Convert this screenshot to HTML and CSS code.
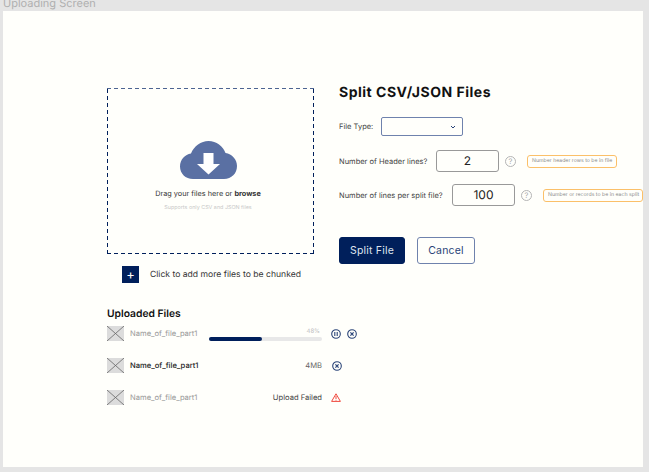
FILE: index.html
```html
<!DOCTYPE html>
<html lang="en">
<head>
    <meta charset="UTF-8">
    <meta name="viewport" content="width=device-width, initial-scale=1.0">
    <title>Uploading Screen</title>
    <link rel="stylesheet" href="styles.css">
</head>
<body>
    <div class="frame-title">Uploading Screen</div>
    <main class="panel">
        <div class="top">
            <section class="left">
                <div class="dropzone">
                    <svg class="cloud" width="57" height="38" viewBox="0 0 57 38">
                        <path fill="#5a70a3" d="M13 38C5.500 38 0 32.500 0 25.500C0 18.500 5 13.500 11 12.500C14 5 21 0 28.500 0C36.500 0 43 5 45.500 12C52 13 57 18.500 57 25C57 32.500 51.500 38 44 38Z"/>
                        <path fill="#fff" d="M23.500 12H33.500V23H40L28.500 33.500L17 23H23.500Z"/>
                    </svg>
                    <p class="drag">Drag your files here or <b>browse</b></p>
                    <p class="supports">Supports only CSV and JSON files</p>
                </div>
                <div class="add-more">
                    <button class="plus">+</button>
                    <span>Click to add more files to be chunked</span>
                </div>
            </section>
            <section class="right">
                <h1>Split CSV/JSON Files</h1>
                <div class="row type-row">
                    <label>File Type:</label>
                    <div class="select">
                        <svg width="6" height="4" viewBox="0 0 6 4"><path d="M1 1L3 3L5 1" fill="none" stroke="#2a4478" stroke-width="1"/></svg>
                    </div>
                </div>
                <div class="row header-row">
                    <label>Number of Header lines?</label>
                    <div class="num">2</div>
                    <span class="help">?</span>
                    <span class="tip">Number header rows to be in file</span>
                </div>
                <div class="row lines-row">
                    <label>Number of lines per split file?</label>
                    <div class="num">100</div>
                    <span class="help">?</span>
                    <span class="tip">Number or records to be in each split</span>
                </div>
                <div class="actions">
                    <button class="btn primary">Split File</button>
                    <button class="btn secondary">Cancel</button>
                </div>
            </section>
        </div>
        <section class="files">
            <h2>Uploaded Files</h2>
            <div class="file">
                <svg class="thumb" width="17" height="15" viewBox="0 0 17 15"><rect width="17" height="15" fill="#dcdcdc"/><path d="M0 0L17 15M17 0L0 15" stroke="#666" stroke-width="0.800"/></svg>
                <span class="name">Name_of_file_part1</span>
                <div class="progress">
                    <span class="pct">48%</span>
                    <div class="track"><div class="fill" style="width: 47%"></div></div>
                </div>
                <svg class="icon" width="10" height="10" viewBox="0 0 10 10"><circle cx="5" cy="5" r="4.300" fill="none" stroke="#2a4478" stroke-width="1.100"/><path d="M3.800 3V7M6.200 3V7" stroke="#2a4478" stroke-width="1.100"/></svg>
                <svg class="icon" width="10" height="10" viewBox="0 0 10 10"><circle cx="5" cy="5" r="4.300" fill="none" stroke="#2a4478" stroke-width="1.100"/><path d="M3.400 3.400L6.600 6.600M6.600 3.400L3.400 6.600" stroke="#2a4478" stroke-width="1.200"/></svg>
            </div>
            <div class="file">
                <svg class="thumb" width="17" height="15" viewBox="0 0 17 15"><rect width="17" height="15" fill="#dcdcdc"/><path d="M0 0L17 15M17 0L0 15" stroke="#666" stroke-width="0.800"/></svg>
                <span class="name done">Name_of_file_part1</span>
                <span class="size">4MB</span>
                <svg class="icon" width="10" height="10" viewBox="0 0 10 10"><circle cx="5" cy="5" r="4.300" fill="none" stroke="#2a4478" stroke-width="1.100"/><path d="M3.400 3.400L6.600 6.600M6.600 3.400L3.400 6.600" stroke="#2a4478" stroke-width="1.200"/></svg>
            </div>
            <div class="file">
                <svg class="thumb" width="17" height="15" viewBox="0 0 17 15"><rect width="17" height="15" fill="#dcdcdc"/><path d="M0 0L17 15M17 0L0 15" stroke="#666" stroke-width="0.800"/></svg>
                <span class="name">Name_of_file_part1</span>
                <span class="failed">Upload Failed</span>
                <svg class="icon warn" width="10" height="9" viewBox="0 0 10 9"><path d="M5 0.800L9.400 8.400H0.600Z" fill="none" stroke="#f0483e" stroke-width="1"/><path d="M5 3V6M5 6.800V7.600" stroke="#f0483e" stroke-width="1"/></svg>
            </div>
        </section>
    </main>
</body>
</html>
```

FILE: styles.css
```css
html, body {
    height: 100%;
}
body {
    margin: 0;
    background-color: #e5e5e5;
    font-family: Inter, "Liberation Sans", sans-serif;
    text-rendering: geometricPrecision;
    overflow: hidden;
}
.frame-title {
    height: 11px;
    padding-left: 3px;
    font-size: 11px;
    line-height: 7px;
    color: #b0b0b0;
    overflow: hidden;
}
.panel {
    margin: 0 6px 0 3px;
    height: 456px;
    background-color: #fffffb;
    padding: 77px 0 0 104px;
    box-sizing: border-box;
}
.top {
    display: flex;
}
.left {
    width: 207px;
}
.dropzone {
    height: 166px;
    box-sizing: border-box;
    background-image:
        repeating-linear-gradient(90deg, #4d6491 0 4px, transparent 4px 7px),
        repeating-linear-gradient(90deg, #001f5b 0 4px, transparent 4px 7px),
        repeating-linear-gradient(0deg, #001f5b 0 4px, transparent 4px 7px),
        repeating-linear-gradient(0deg, #001f5b 0 4px, transparent 4px 7px);
    background-size: 100% 1px, 100% 1px, 1px 100%, 1px 100%;
    background-position: 0 0, 0 100%, 0 0, 100% 0;
    background-repeat: no-repeat;
    display: flex;
    flex-direction: column;
    align-items: center;
    padding: 53px 5px 0 0;
}
.cloud {
    display: block;
}
.drag {
    margin: 10px 0 0;
    font-size: 7.300px;
    line-height: 9px;
    color: #333;
    white-space: nowrap;
}
.drag b {
    font-weight: 700;
}
.supports {
    margin: 7px 0 0;
    font-size: 5.400px;
    line-height: 7px;
    color: #c8c8c8;
    white-space: nowrap;
}
.add-more {
    display: flex;
    align-items: center;
    gap: 11px;
    margin: 12px 0 0 15px;
    font-size: 8.600px;
    color: #333;
    white-space: nowrap;
}
.plus {
    width: 17px;
    height: 17px;
    padding: 0;
    border: none;
    background-color: #001f5b;
    color: #fff;
    font-size: 13px;
    line-height: 17px;
    font-family: inherit;
}
.right {
    margin-left: 25px;
    flex: 1;
    min-width: 0;
}
h1 {
    margin: -4px 0 0;
    font-size: 14px;
    line-height: 18px;
    font-weight: 700;
    letter-spacing: 0.500px;
    color: #111;
    white-space: nowrap;
}
.row {
    display: flex;
    align-items: center;
    font-size: 7.500px;
    color: #444;
    white-space: nowrap;
}
.row label {
    flex: none;
}
.type-row {
    margin-top: 15px;
}
.type-row label {
    width: 42px;
}
.select {
    width: 82px;
    height: 19px;
    box-sizing: border-box;
    border: 1px solid #6f82ad;
    border-radius: 2px;
    display: flex;
    align-items: center;
    justify-content: flex-end;
    padding-right: 6px;
}
.header-row {
    margin-top: 14px;
}
.header-row label {
    width: 97px;
}
.lines-row {
    margin-top: 12px;
}
.lines-row label {
    width: 113px;
}
.num {
    width: 63px;
    height: 22px;
    flex: none;
    box-sizing: border-box;
    border: 1px solid #999;
    border-radius: 3px;
    text-align: center;
    font-size: 12px;
    line-height: 20px;
    color: #222;
}
.help {
    width: 11px;
    height: 11px;
    flex: none;
    box-sizing: border-box;
    margin-left: 6px;
    border: 1px solid #b5b5b5;
    border-radius: 50%;
    text-align: center;
    font-size: 7.500px;
    line-height: 9px;
    color: #aaa;
}
.tip {
    margin-left: 11px;
    height: 13px;
    flex: none;
    box-sizing: border-box;
    padding: 0 4px;
    border: 1px solid #fbc069;
    border-radius: 3px;
    font-size: 5.200px;
    line-height: 11px;
    color: #888;
}
.lines-row .tip {
    padding-right: 3px;
}
.actions {
    display: flex;
    gap: 12px;
    margin-top: 31px;
}
.btn {
    height: 27px;
    box-sizing: border-box;
    border-radius: 3px;
    font-family: inherit;
    font-size: 10.500px;
    letter-spacing: 0.200px;
    padding: 0;
}
.primary {
    width: 66px;
    background-color: #001f5b;
    border: 1px solid #001f5b;
    color: #dfe4ee;
}
.secondary {
    width: 58px;
    background: none;
    border: 1px solid #6f82ad;
    color: #2a4478;
}
.files {
    margin-top: 25px;
    width: 250px;
}
h2 {
    margin: 0;
    font-size: 10.300px;
    line-height: 12px;
    font-weight: 600;
    color: #111;
}
.file {
    display: flex;
    align-items: center;
    gap: 6px;
    height: 15px;
    margin-bottom: 17px;
    font-size: 7.600px;
    color: #999;
}
h2 + .file {
    margin-top: 6px;
}
.thumb {
    flex: none;
}
.name {
    width: 71px;
    flex: none;
    white-space: nowrap;
}
.done {
    color: #222;
    font-weight: 500;
}
.progress {
    width: 115px;
    margin-left: 2px;
    margin-right: 3px;
    text-align: right;
    font-size: 6px;
    color: #bbb;
    padding-top: 2px;
}
.pct {
    display: block;
    line-height: 8px;
    padding-right: 2px;
}
.track {
    height: 4px;
    border-radius: 2px;
    background-color: #e8e8e8;
    margin-top: 1px;
}
.fill {
    height: 4px;
    border-radius: 2px;
    background-color: #001f5b;
}
.size, .failed {
    margin-left: auto;
    margin-right: 4px;
    white-space: nowrap;
}
.size {
    color: #666;
}
.failed {
    color: #444;
}
.icon {
    flex: none;
}
.size + .icon {
    margin-right: 15px;
}
.failed + .icon {
    margin-left: -1px;
    margin-right: 16px;
}
```
